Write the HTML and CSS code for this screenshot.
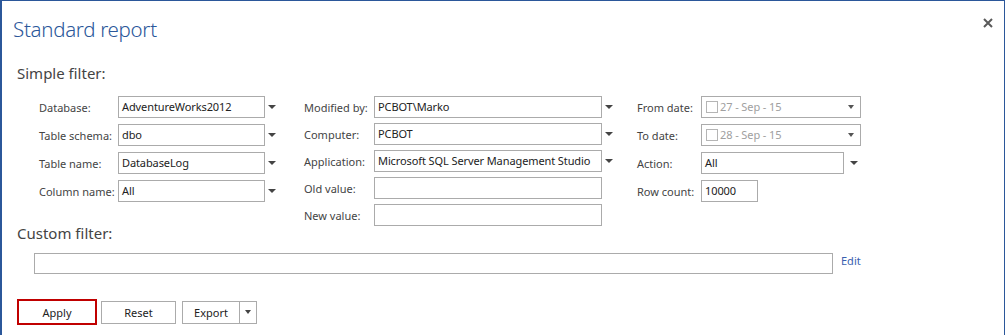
FILE: index.html
```html
<!DOCTYPE html>
<html lang="en">
<head>
  <meta charset="UTF-8">
  <title>Standard report</title>
  <link rel="stylesheet" href="styles.css">
</head>
<body>
  <div class="dialog">
    <div class="dialog-header">
      <div class="dialog-title">Standard report</div>
      <svg class="close-icon" width="10" height="10" viewBox="0 0 10 10">
        <path d="M1 1L9 9M9 1L1 9" stroke="#5a5a5a" stroke-width="2"/>
      </svg>
    </div>

    <div class="section-title">Simple filter:</div>

    <div class="filters">
      <div class="filter-col col-1">
        <div class="filter-label">Database:</div>
        <div class="filter-input">AdventureWorks2012</div>
        <div class="drop-arrow"></div>

        <div class="filter-label">Table schema:</div>
        <div class="filter-input">dbo</div>
        <div class="drop-arrow"></div>

        <div class="filter-label">Table name:</div>
        <div class="filter-input">DatabaseLog</div>
        <div class="drop-arrow"></div>

        <div class="filter-label">Column name:</div>
        <div class="filter-input">All</div>
        <div class="drop-arrow"></div>
      </div>

      <div class="filter-col col-2">
        <div class="filter-label">Modified by:</div>
        <div class="filter-input">PCBOT\Marko</div>
        <div class="drop-arrow"></div>

        <div class="filter-label">Computer:</div>
        <div class="filter-input">PCBOT</div>
        <div class="drop-arrow"></div>

        <div class="filter-label">Application:</div>
        <div class="filter-input">Microsoft SQL Server Management Studio</div>
        <div class="drop-arrow"></div>

        <div class="filter-label">Old value:</div>
        <div class="filter-input"></div>
        <div></div>

        <div class="filter-label">New value:</div>
        <div class="filter-input"></div>
        <div></div>
      </div>

      <div class="filter-col col-3">
        <div class="filter-label">From date:</div>
        <div class="filter-input date-input">
          <span class="date-check"></span>27 - Sep - 15
          <span class="drop-arrow inner"></span>
        </div>

        <div class="filter-label">To date:</div>
        <div class="filter-input date-input">
          <span class="date-check"></span>28 - Sep - 15
          <span class="drop-arrow inner"></span>
        </div>

        <div class="filter-label">Action:</div>
        <div class="action-wrap">
          <div class="filter-input action-input">All</div>
          <div class="drop-arrow"></div>
        </div>

        <div class="filter-label">Row count:</div>
        <div class="filter-input count-input">10000</div>
      </div>
    </div>

    <div class="section-title custom-title">Custom filter:</div>

    <div class="custom-row">
      <div class="custom-input"></div>
      <a href="#" class="edit-link">Edit</a>
    </div>

    <div class="buttons">
      <button class="btn btn-apply">Apply</button>
      <button class="btn">Reset</button>
      <div class="split-btn">
        <button class="btn btn-export">Export</button>
        <button class="btn btn-more"><span class="drop-arrow"></span></button>
      </div>
    </div>
  </div>
</body>
</html>
```

FILE: styles.css
```css
:root {
  --accent: #2b579a;
  --label: #444444;
  --text: #222222;
  --border: #ababab;
  --muted: #a0a0a0;
}

body {
  margin: 0;
  padding: 0;
  background-color: #ffffff;
  font-family: 'Segoe UI', 'Noto Sans', 'Open Sans', sans-serif;
  color: var(--text);
}

.dialog {
  width: 1002px;
  height: 334px;
  border: 1px solid var(--accent);
  border-left-width: 2px;
  border-bottom: none;
  overflow: hidden;
}

.dialog-header {
  display: flex;
  justify-content: space-between;
  align-items: center;
  padding: 13px 11px 0 11px;
  height: 30px;
}

.dialog-title {
  font-size: 20.5px;
  color: var(--accent);
  font-weight: 300;
  letter-spacing: -0.3px;
}

.close-icon {
  margin-top: -12px;
}

.section-title {
  font-size: 15px;
  color: var(--label);
  margin: 19px 0 0 15px;
  line-height: 20px;
}

.filters {
  display: flex;
  margin: 13px 0 0 37px;
}

.filter-col {
  display: grid;
  align-items: center;
  font-size: 11px;
  white-space: nowrap;
}

.col-1 {
  width: 265px;
  grid-template-columns: 79px 147px 20px;
  row-gap: 6px;
  grid-auto-rows: 22px;
}

.col-2 {
  width: 333px;
  grid-template-columns: 70px 228px 20px;
  row-gap: 5px;
  grid-auto-rows: 22px;
}

.col-3 {
  grid-template-columns: 64px 170px;
  row-gap: 6px;
  grid-auto-rows: 22px;
}

.filter-label {
  color: var(--label);
}

.filter-input {
  box-sizing: border-box;
  height: 22px;
  border: 1px solid var(--border);
  padding: 0 3px;
  line-height: 20px;
  white-space: nowrap;
  overflow: hidden;
  color: var(--text);
  letter-spacing: -0.1px;
}

.drop-arrow {
  width: 0;
  height: 0;
  border-left: 4px solid transparent;
  border-right: 4px solid transparent;
  border-top: 4px solid #444444;
  margin-left: 3px;
}

.date-input {
  width: 160px;
  display: flex;
  align-items: center;
  color: var(--muted);
  padding-left: 4px;
  position: relative;
}

.date-check {
  width: 10px;
  height: 10px;
  border: 1px solid #b5b5b5;
  margin-right: 2px;
}

.drop-arrow.inner {
  position: absolute;
  right: 6px;
  top: 8px;
  border-top-color: #555555;
  border-left-width: 3px;
  border-right-width: 3px;
}

.action-wrap {
  display: flex;
  align-items: center;
}

.action-input {
  width: 143px;
}

.action-wrap .drop-arrow {
  margin-left: 6px;
}

.count-input {
  width: 57px;
}

.custom-title {
  margin-top: -3px;
}

.custom-row {
  display: flex;
  align-items: center;
  margin: 10px 0 0 32px;
}

.custom-input {
  box-sizing: border-box;
  width: 799px;
  height: 21px;
  border: 1px solid var(--border);
}

.edit-link {
  font-size: 11px;
  color: #3a5fb0;
  text-decoration: none;
  margin: -7px 0 0 8px;
}

.buttons {
  display: flex;
  align-items: center;
  gap: 4px;
  margin: 25px 0 0 15px;
}

.btn {
  box-sizing: border-box;
  height: 23px;
  width: 75px;
  border: 1px solid var(--border);
  background-color: #ffffff;
  font-family: inherit;
  font-size: 11px;
  color: var(--text);
  padding: 0;
  cursor: pointer;
}

.btn-apply {
  width: 80px;
  height: 26px;
  border: 2px solid #c00000;
}

.split-btn {
  display: flex;
  margin-left: 2px;
}

.btn-export {
  width: 58px;
}

.btn-more {
  width: 17px;
  border-left: none;
  display: flex;
  align-items: center;
  justify-content: center;
}

.btn-more .drop-arrow {
  margin-left: 0;
  border-left-width: 3px;
  border-right-width: 3px;
}
```
